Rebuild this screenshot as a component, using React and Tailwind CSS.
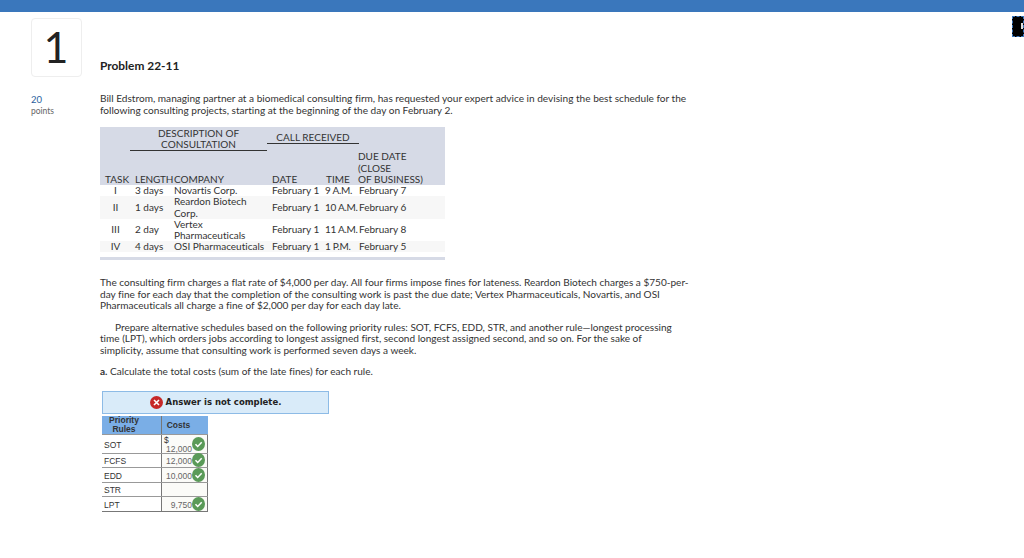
import React from 'react'

const font = { fontFamily: 'Lato, sans-serif', fontVariantLigatures: 'none' }

const Check = () => (
    <svg width="13" height="14" viewBox="0 0 13 14" className="absolute right-[2px] top-1/2 -translate-y-1/2">
        <ellipse cx="6.5" cy="7" rx="6.5" ry="7" fill="#5a9a58" />
        <path d="M3.5 7.2l2.2 2.3 4-4.2" fill="none" stroke="#fff" strokeWidth="1.5" />
    </svg>
)

const tasks = [
    { task: 'I', length: '3 days', company: 'Novartis Corp.', time: '9 A.M.', due: 'February 7', bg: 'bg-white', h: 'h-[11px]' },
    { task: 'II', length: '1 days', company: <>Reardon Biotech<br />Corp.</>, time: '10 A.M.', due: 'February 6', bg: 'bg-[#f7f7f7]', h: 'h-[23px]' },
    { task: 'III', length: '2 day', company: <>Vertex<br />Pharmaceuticals</>, time: '11 A.M.', due: 'February 8', bg: 'bg-white', h: 'h-[22px]' },
    { task: 'IV', length: '4 days', company: 'OSI Pharmaceuticals', time: '1 P.M.', due: 'February 5', bg: 'bg-[#f7f7f7]', h: 'h-[11px]' },
]

const costs = [
    { rule: 'SOT', cost: '12,000', dollar: true, h: 'h-[19px]' },
    { rule: 'FCFS', cost: '12,000', h: 'h-[14px]' },
    { rule: 'EDD', cost: '10,000', h: 'h-[15px]' },
    { rule: 'STR', cost: '', h: 'h-[14px]' },
    { rule: 'LPT', cost: '9,750', h: 'h-[14px]' },
]

const App = () => {
    return (
        <div className="w-[1024px] h-[558px] bg-white overflow-hidden text-[#333] relative" style={font}>
            <div className="h-3 bg-[#3a77bc]" />
            <div className="absolute left-[1012px] top-[16px] w-[12px] h-[21px] bg-black border border-dashed border-[#3a77bc]">
                <div className="absolute right-0 top-[6px] w-[2px] h-[6px] bg-[#ddd]" />
            </div>
            <div className="flex pl-[31px] pt-1.5">
                <div className="w-[69px] shrink-0">
                    <div className="w-[51px] h-[59px] border border-[#eee] rounded-sm flex items-center justify-center text-[43px] text-[#222] pr-[1px]">1</div>
                    <div className="mt-[17px] text-[9.5px] leading-[12px] text-[#2b5f9e]">20</div>
                    <div className="text-[8.5px] leading-[10px] text-[#666]">points</div>
                </div>
                <div className="w-[620px]">
                    <h2 className="mt-[41px] text-[11.9px] leading-[14px] font-bold text-[#222]">Problem 22-11</h2>
                    <p className="mt-[20px] text-[10.1px] leading-[11.5px]">Bill Edstrom, managing partner at a biomedical consulting firm, has requested your expert advice in devising the best schedule for the<br />following consulting projects, starting at the beginning of the day on February 2.</p>
                    <div className="mt-[11px] w-[345px] text-[10px] leading-[11.5px]">
                        <div className="bg-[#d6dae6] h-[58px] flex flex-col">
                            <div className="flex h-[24px]">
                                <div className="w-[30px]" />
                                <div className="w-[137px] border-b border-[#333] text-center h-[24px] pt-[1px] leading-[11px]">DESCRIPTION OF<br />CONSULTATION</div>
                                <div className="w-[92px] border-b border-[#333] text-center pt-[5px] h-[17px]">CALL RECEIVED</div>
                            </div>
                            <div className="flex items-end flex-1">
                                <div className="w-[35px] pl-[5px]">TASK</div>
                                <div className="w-[39px] whitespace-nowrap tracking-[-0.2px]">LENGTH</div>
                                <div className="w-[98px]">COMPANY</div>
                                <div className="w-[53px]">DATE</div>
                                <div className="w-[33px] pl-[1px]">TIME</div>
                                <div className="w-[87px]">DUE DATE<br />(CLOSE<br />OF BUSINESS)</div>
                            </div>
                        </div>
                        {tasks.map((t) => (
                            <div key={t.task} className={`flex items-center whitespace-nowrap ${t.bg} ${t.h}`}>
                                <div className="w-[35px] text-center pr-[4px]">{t.task}</div>
                                <div className="w-[39px]">{t.length}</div>
                                <div className="w-[98px]">{t.company}</div>
                                <div className="w-[53px]">February 1</div>
                                <div className="w-[33px] tracking-[-0.3px]">{t.time}</div>
                                <div className="w-[87px] pl-[1px]">{t.due}</div>
                            </div>
                        ))}
                    </div>
                    <div className="mt-[5px] w-[345px] h-[3px] bg-[#d6dae6]" />
                    <div className="text-[10.05px] leading-[11.5px]">
                        <p className="mt-[17px]">The consulting firm charges a flat rate of $4,000 per day. All four firms impose fines for lateness. Reardon Biotech charges a $750-per-<br />day fine for each day that the completion of the consulting work is past the due date; Vertex Pharmaceuticals, Novartis, and OSI<br />Pharmaceuticals all charge a fine of $2,000 per day for each day late.</p>
                        <p className="mt-[10px] indent-[15px]">Prepare alternative schedules based on the following priority rules: SOT, FCFS, EDD, STR, and another rule—longest processing<br />time (LPT), which orders jobs according to longest assigned first, second longest assigned second, and so on. For the sake of<br />simplicity, assume that consulting work is performed seven days a week.</p>
                        <p className="mt-[10px]"><b>a.</b> Calculate the total costs (sum of the late fines) for each rule.</p>
                    </div>
                    <div className="mt-[13px] ml-[2px] w-[227px] h-[23px] bg-[#d9ebf9] border border-[#8dbbe6] flex items-center justify-center gap-[3px] font-bold text-[8.5px]" style={{ fontFamily: '"DejaVu Sans", sans-serif' }}>
                        <svg width="13" height="13" viewBox="0 0 13 13"><circle cx="6.5" cy="6.5" r="6.5" fill="#c62828" /><path d="M4 4l5 5M9 4l-5 5" stroke="#fff" strokeWidth="1.6" /></svg>
                        <span className="text-[#222]">Answer is not complete.</span>
                    </div>
                    <div className="ml-[2px] mt-[2px] w-[106px] text-[8.5px] leading-[9px] border-b border-[#777]" style={{ fontFamily: '"Liberation Sans", sans-serif' }}>
                        <div className="flex h-[19px] bg-[#7aaee6] font-bold text-[#333] border-b border-[#999]">
                            <div className="w-[60px] border-r border-[#777] text-center pr-[15px]">Priority<br />Rules</div>
                            <div className="flex-1 text-center self-center pr-[13px] pt-[1px]">Costs</div>
                        </div>
                        {costs.map((c) => (
                            <div key={c.rule} className={`flex ${c.h} border-b border-[#999] last:border-b-0`}>
                                <div className="w-[60px] border-r border-[#777] pl-[2px] pt-[3px] flex items-center">{c.rule}</div>
                                <div className="flex-1 relative border-r border-[#777] bg-[#fbfbf8] text-[#666] flex flex-col justify-center pl-[2px] pr-[15px] pt-[3px]">
                                    {c.dollar && <span className="text-[#333]">$</span>}
                                    {c.cost && <span className="text-right">{c.cost}</span>}
                                    {c.cost && <Check />}
                                </div>
                            </div>
                        ))}
                    </div>
                </div>
            </div>
        </div>
    )
}

export default App
